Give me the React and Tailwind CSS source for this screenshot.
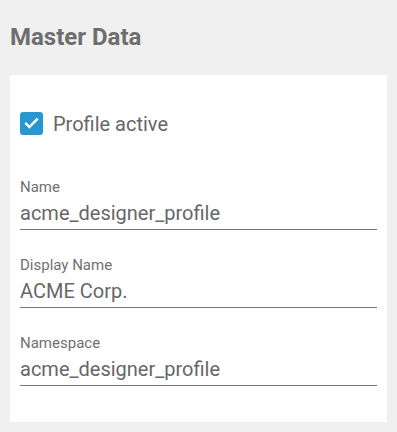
import React from "react";

const fields = [
  { label: "Name", value: "acme_designer_profile" },
  { label: "Display Name", value: "ACME Corp." },
  { label: "Namespace", value: "acme_designer_profile" },
];

function Field({ label, value }) {
  return (
    <div className="flex flex-col">
      <span className="text-[15px] leading-[18px] text-[#707070]">{label}</span>
      <div className="mt-[5px] h-[29px] pb-[4px] border-b border-[#777777] text-[20px] leading-[24px] text-[#676767]">
        {value}
      </div>
    </div>
  );
}

export default function App() {
  return (
    <div
      className="min-h-screen bg-[#f0f0f0] px-[10px] pt-[23px] pb-[11px]"
      style={{ fontFamily: "Roboto, 'Liberation Sans', sans-serif" }}
    >
      <h2 className="text-[24px] leading-[28px] font-bold text-[#6e6e6e]">Master Data</h2>

      {/* Card */}
      <div className="mt-[24px] bg-white px-[10px] pt-[37px] pb-[36px]">
        <label className="flex items-center gap-[10px] h-[23px]">
          <span className="w-[23px] h-[23px] rounded-[3px] bg-[#2996cf] flex items-center justify-center">
            <svg width="17" height="17" viewBox="0 0 24 24" fill="none" stroke="white" strokeWidth="3.6" strokeLinecap="square">
              <path d="M4.5 12.5l4.5 4.5L19.5 6.5" />
            </svg>
          </span>
          <span className="text-[20px] leading-[24px] text-[#676767]">Profile active</span>
        </label>

        <div className="mt-[43px] flex flex-col gap-[26px]">
          {fields.map((f) => (
            <Field key={f.label} label={f.label} value={f.value} />
          ))}
        </div>
      </div>
    </div>
  );
}
